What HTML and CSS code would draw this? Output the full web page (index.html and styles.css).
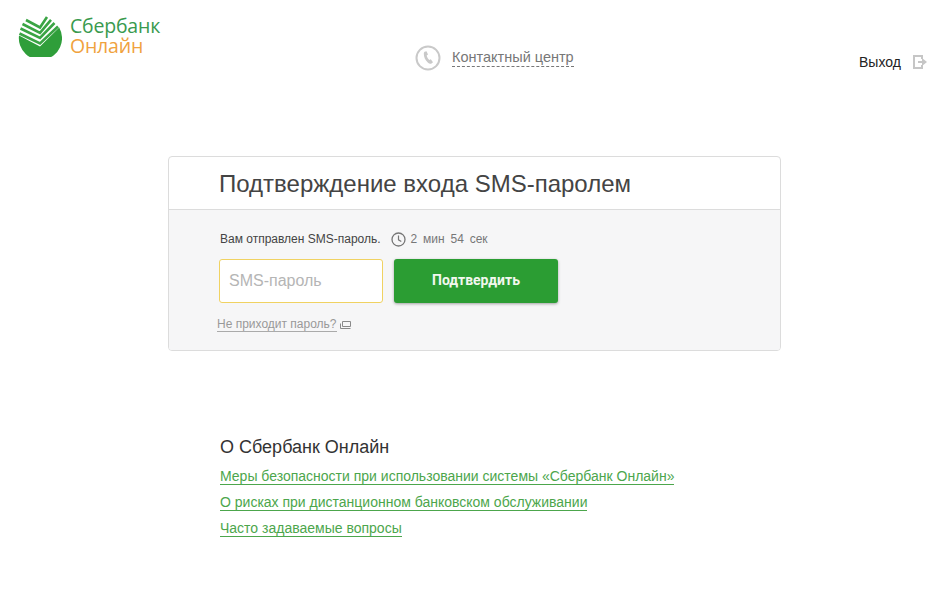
FILE: index.html
```html
<!DOCTYPE html>
<html lang="ru">
<head>
<meta charset="utf-8">
<title>Сбербанк Онлайн</title>
<link rel="stylesheet" href="styles.css">
</head>
<body>
<header class="top">
  <a class="logo">
    <svg class="logo-mark" width="44" height="41" viewBox="0 0 44 41">
      <path fill="#2f9e3a" d="M41.2 11.5A21.6 21.6 0 1 1 1 19.5L22 30.5 41.2 11.5Z"/>
      <path fill="#2f9e3a" d="M0.8 15.5 22 26.5 37.5 11 33.5 7.5 22 18 3 9Z" opacity="0"/>
      <g fill="none" stroke="#3aa444" stroke-width="2.6">
        <path d="M1.5 17.5 22 27.5 40 10.5"/>
        <path d="M2.5 12.5 22 22 36.5 7"/>
        <path d="M4.5 8 22 16.8 33 3.8"/>
        <path d="M8 4 22 11.5 29 1"/>
      </g>
    </svg>
    <span class="logo-text"><span class="logo-a">Сбербанк</span><span class="logo-b">Онлайн</span></span>
  </a>
  <a class="contact">
    <svg width="26" height="26" viewBox="0 0 26 26">
      <circle cx="13" cy="13" r="11.5" fill="none" stroke="#c9c9c9" stroke-width="2"/>
      <path fill="#c9c9c9" d="M9.6 6.8l1.9-.6 1.5 3.4-1.3 1c.3 1.700 1.300 3.300 2.600 4.400l1.500-.7 2.200 2.900-1.500 1.300c-1.200.5-2.500.2-3.500-.7-2.600-2.300-4.200-5.600-4.200-9 0-.9.200-1.600.800-2Z"/>
    </svg>
    <span class="contact-label">Контактный центр</span>
  </a>
  <a class="exit">
    <span class="exit-label">Выход</span>
    <svg width="14" height="14" viewBox="0 0 14 14">
      <path fill="none" stroke="#c6c6c6" stroke-width="2" d="M9 4V1H1v12h8v-3"/>
      <path fill="#c6c6c6" d="M5 6h4V3l5 4-5 4V8H5Z"/>
    </svg>
  </a>
</header>

<main class="card">
  <h1 class="card-title">Подтверждение входа SMS-паролем</h1>
  <div class="card-body">
    <div class="status">
      <span class="status-text">Вам отправлен SMS-пароль.</span>
      <svg class="clock" width="15" height="15" viewBox="0 0 15 15">
        <circle cx="7.500" cy="7.500" r="6.500" fill="none" stroke="#777" stroke-width="1.300"/>
        <path fill="none" stroke="#777" stroke-width="1.200" d="M7.500 3.500v4.300l2.800 1.700"/>
      </svg>
      <span class="timer">2 мин 54 сек</span>
    </div>
    <div class="form-row">
      <input class="sms-input" type="text" placeholder="SMS-пароль">
      <button class="confirm" type="button">Подтвердить</button>
    </div>
    <div class="help">
      <a class="help-link">Не приходит пароль?</a>
      <svg width="11" height="8" viewBox="0 0 11 8">
        <path fill="none" stroke="#8a8a8a" d="M2.500 5.500V.5h8v5ZM.5 2.500v5h10"/>
      </svg>
    </div>
  </div>
</main>

<section class="about">
  <h2 class="about-title">О Сбербанк Онлайн</h2>
  <a class="about-link">Меры безопасности при использовании системы «Сбербанк Онлайн»</a>
  <a class="about-link">О рисках при дистанционном банковском обслуживании</a>
  <a class="about-link">Часто задаваемые вопросы</a>
</section>
</body>
</html>
```

FILE: styles.css
```css
html, body {
  margin: 0;
  padding: 0;
  background: #fff;
}
body {
  width: 927px;
  height: 595px;
  overflow: hidden;
  font-family: "Liberation Sans", Arial, sans-serif;
  color: #333;
}
.top {
  display: flex;
  align-items: flex-start;
  height: 156px;
  box-sizing: border-box;
  padding: 16px 0 0 18px;
}
.logo {
  display: flex;
  align-items: flex-start;
  gap: 8px;
  width: 397px;
}
.logo-mark {
  display: block;
}
.logo-text {
  display: flex;
  flex-direction: column;
  font-family: "Open Sans", "Liberation Sans", sans-serif;
  font-size: 19.500px;
  line-height: 20px;
  letter-spacing: -0.200px;
}
.logo-a { color: #399a4e; }
.logo-b { color: #f0a23e; }
.contact {
  display: flex;
  align-items: center;
  gap: 11px;
  margin-top: 29px;
  width: 444px;
}
.contact-label {
  font-size: 14.500px;
  line-height: 17px;
  color: #777;
  border-bottom: 1px dashed #777;
}
.exit {
  display: flex;
  align-items: center;
  gap: 12px;
  margin-top: 38px;
}
.exit-label {
  font-size: 14px;
  line-height: 16px;
  color: #222;
}
.card {
  width: 613px;
  height: 195px;
  box-sizing: border-box;
  margin-left: 168px;
  border: 1px solid #dcdcdc;
  border-radius: 4px;
  overflow: hidden;
}
.card-title {
  margin: 0;
  height: 52px;
  padding-left: 50px;
  border-bottom: 1px solid #dcdcdc;
  font-size: 24px;
  font-weight: normal;
  line-height: 54px;
  color: #444;
}
.card-body {
  height: 141px;
  box-sizing: border-box;
  padding: 20px 0 0 50px;
  background: #f6f6f7;
}
.status {
  display: flex;
  align-items: center;
  height: 18px;
}
.status-text {
  margin-left: 1px;
  font-size: 12px;
  color: #444;
}
.clock {
  margin-left: 10px;
}
.timer {
  margin-left: 5px;
  font-size: 12px;
  color: #777;
  word-spacing: 2.500px;
}
.form-row {
  display: flex;
  gap: 11px;
  margin-top: 11px;
}
.sms-input {
  width: 164px;
  height: 44px;
  box-sizing: border-box;
  padding: 0 9px;
  border: 1px solid #f0d262;
  border-radius: 3px;
  background: #fff;
  font-family: inherit;
  font-size: 16px;
  outline: none;
}
.sms-input::placeholder {
  color: #b5b5b5;
  opacity: 1;
}
.confirm {
  width: 164px;
  height: 44px;
  padding: 0 0 3px;
  border: 0;
  border-radius: 3px;
  background: #2b9d33;
  box-shadow: 0 1px 3px rgba(0, 0, 0, 0.35);
  font-family: Roboto, "Liberation Sans", sans-serif;
  font-size: 14px;
  font-weight: 700;
  color: #f2f7ee;
}
.help {
  display: flex;
  align-items: center;
  gap: 3px;
  margin: 14px 0 0 -2px;
}
.help-link {
  font-size: 12px;
  line-height: 14px;
  color: #999;
  border-bottom: 1px solid #aaa;
}
.about {
  display: flex;
  flex-direction: column;
  align-items: flex-start;
  margin: 85px 0 0 220px;
}
.about-title {
  margin: 0 0 10px;
  font-size: 18px;
  font-weight: normal;
  line-height: 22px;
  color: #333;
}
.about-link {
  margin-bottom: 9px;
  font-size: 14px;
  line-height: 16px;
  color: #4ca64c;
  border-bottom: 1px solid #4ca64c;
}
```
